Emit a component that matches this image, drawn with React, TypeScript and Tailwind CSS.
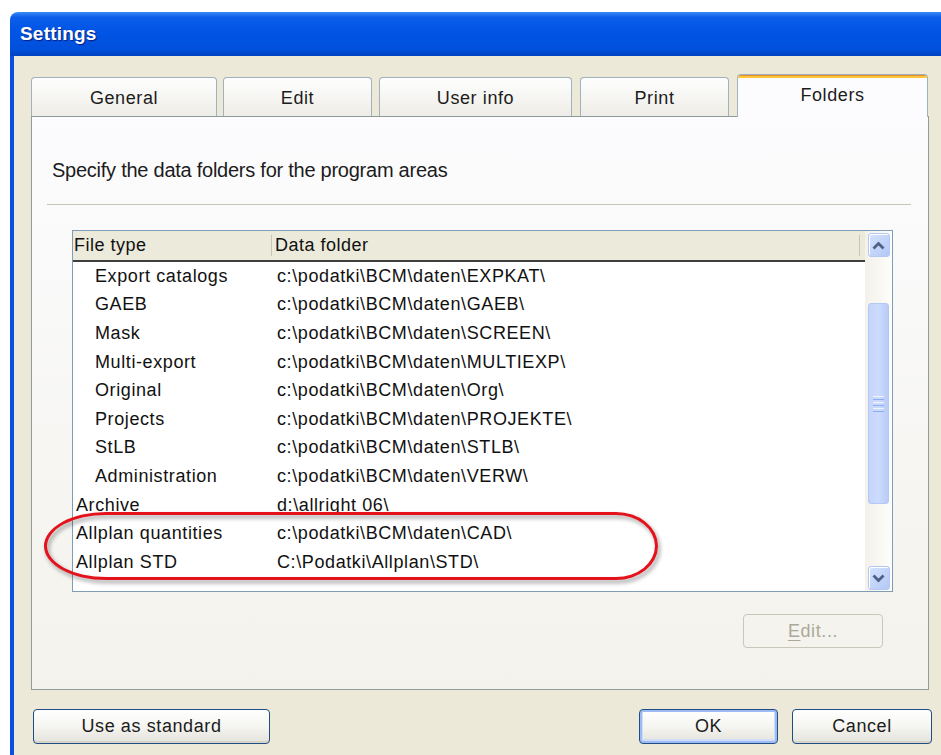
import React from "react";

type Row = { name: string; path: string; child: boolean };

const rows: Row[] = [
  { name: "Export catalogs", path: "c:\\podatki\\BCM\\daten\\EXPKAT\\", child: true },
  { name: "GAEB", path: "c:\\podatki\\BCM\\daten\\GAEB\\", child: true },
  { name: "Mask", path: "c:\\podatki\\BCM\\daten\\SCREEN\\", child: true },
  { name: "Multi-export", path: "c:\\podatki\\BCM\\daten\\MULTIEXP\\", child: true },
  { name: "Original", path: "c:\\podatki\\BCM\\daten\\Org\\", child: true },
  { name: "Projects", path: "c:\\podatki\\BCM\\daten\\PROJEKTE\\", child: true },
  { name: "StLB", path: "c:\\podatki\\BCM\\daten\\STLB\\", child: true },
  { name: "Administration", path: "c:\\podatki\\BCM\\daten\\VERW\\", child: true },
  { name: "Archive", path: "d:\\allright 06\\", child: false },
  { name: "Allplan quantities", path: "c:\\podatki\\BCM\\daten\\CAD\\", child: false },
  { name: "Allplan STD", path: "C:\\Podatki\\Allplan\\STD\\", child: false },
];

function Chevron({ up }: { up: boolean }) {
  return (
    <svg width="13" height="9" viewBox="0 0 13 9">
      <path
        d={up ? "M1.5 7.5 L6.5 2.5 L11.5 7.5" : "M1.5 1.5 L6.5 6.5 L11.5 1.5"}
        fill="none"
        stroke="#4D6185"
        strokeWidth="2.8"
      />
    </svg>
  );
}

function ScrollButton({ up }: { up: boolean }) {
  return (
    <div className="mx-auto flex h-[24px] w-[22px] items-center justify-center rounded-[3px] border border-[#B4C8F5] bg-gradient-to-br from-[#D6E2FD] to-[#B3C8F6] shadow-[inset_1px_1px_0_#ffffff]">
      <Chevron up={up} />
    </div>
  );
}

function Tab({ label, className }: { label: string; className: string }) {
  return (
    <div
      className={`flex h-[39px] items-center justify-center rounded-t-[4px] border border-b-0 border-[#9FB2BE] bg-gradient-to-b from-[#FEFEFE] to-[#EEEDE7] pt-[3px] text-[18px] tracking-[0.6px] text-[#1c1c1c] ${className}`}
    >
      {label}
    </div>
  );
}

function XPButton({
  children,
  className,
  focused,
}: {
  children: React.ReactNode;
  className: string;
  focused?: boolean;
}) {
  return (
    <div
      className={`flex items-center justify-center rounded-[4px] border border-[#1F4E86] bg-gradient-to-b from-[#FFFFFF] via-[#F5F5F1] to-[#E3E2DB] text-[18px] tracking-[0.6px] text-[#1c1c1c] ${
        focused
          ? "shadow-[inset_0_0_0_2px_#9DBBF2,inset_0_-1px_0_3px_#CFDDF8]"
          : "shadow-[inset_0_-2px_0_#D6D3C8]"
      } ${className}`}
    >
      {children}
    </div>
  );
}

export default function App() {
  return (
    <div className="relative h-[755px] w-[941px] overflow-hidden bg-white pl-[10px] pt-[12px] font-['Liberation_Sans',Arial,sans-serif]">
      {/* dialog window */}
      <div className="flex h-full flex-col overflow-hidden rounded-tl-[8px]">
        {/* title bar */}
        <div className="flex h-[44px] shrink-0 items-center bg-[linear-gradient(to_bottom,#3D8BF5_0%,#0C5DEA_12%,#0055E5_45%,#0150DC_85%,#0042C2_100%)] pl-[10px]">
          <span className="text-[19px] font-bold tracking-[0.2px] text-white [text-shadow:1px_1px_1px_#0A1E80]">
            Settings
          </span>
        </div>

        {/* window body */}
        <div className="flex flex-1 flex-col border-l-[4px] border-[#0B4FE0] bg-[#ECE9D8] pl-[17px] pt-[17px]">
          {/* tabs */}
          <div className="flex h-[43px] items-end">
            <Tab label="General" className="w-[186px]" />
            <Tab label="Edit" className="ml-[6px] w-[149px]" />
            <Tab label="User info" className="ml-[7px] w-[193px]" />
            <Tab label="Print" className="ml-[8px] w-[149px]" />
            <div className="relative z-10 -mb-px ml-[8px] flex h-[43px] w-[191px] flex-col overflow-hidden rounded-t-[4px] border border-b-0 border-[#9FB2BE] bg-[#FCFCFE]">
              <div className="h-[1px] bg-[#E68B2C]" />
              <div className="h-[2px] bg-[#FFC73C]" />
              <div className="flex flex-1 items-center justify-center pb-[5px] text-[18px] tracking-[0.6px] text-[#1c1c1c]">
                Folders
              </div>
            </div>
          </div>

          {/* tab panel */}
          <div className="flex h-[574px] w-[898px] flex-col border border-[#919B9C] bg-gradient-to-b from-[#FCFCFE] to-[#F3F2EC]">
            <div className="pl-[20px] pt-[41px] text-[20px] leading-[24px] tracking-[-0.25px] text-[#1c1c1c]">
              Specify the data folders for the program areas
            </div>
            <div className="ml-[15px] mr-[17px] mt-[22px] h-[2px] border-t border-[#C8C5B5] border-b-white" />

            {/* list view */}
            <div className="ml-[40px] mt-[24px] flex h-[362px] w-[821px] border border-[#7F9DB9] bg-white">
              <div className="flex flex-1 flex-col">
                {/* header */}
                <div className="flex h-[31px] shrink-0 items-stretch border-b-2 border-[#3F3F3F] bg-[#EBEADB] text-[18px] tracking-[0.5px] text-[#111]">
                  <div className="flex w-[198px] items-center pl-[1px]">File type</div>
                  <div className="my-[4px] w-px bg-[#C7C5B2]" />
                  <div className="flex flex-1 items-center pl-[3px]">Data folder</div>
                  <div className="my-[4px] mr-[5px] w-px bg-[#C7C5B2]" />
                </div>
                {/* rows */}
                <div className="flex flex-col">
                  {rows.map((r) => (
                    <div key={r.name} className="flex h-[28.6px] items-center text-[18px] tracking-[0.6px] text-[#111]">
                      <div className={`w-[199px] ${r.child ? "pl-[22px]" : "pl-[3px]"}`}>{r.name}</div>
                      <div className="pl-[5px]">{r.path}</div>
                    </div>
                  ))}
                </div>
              </div>

              {/* vertical scrollbar */}
              <div className="flex w-[27px] flex-col bg-gradient-to-r from-[#F3F1EA] to-[#FDFDFA] pb-[1px] pt-[2px]">
                <ScrollButton up />
                <div className="mx-auto mt-[46px] flex h-[201px] w-[21px] flex-col items-center justify-center gap-[2px] rounded-[3px] border border-[#B3C8F4] bg-gradient-to-r from-[#C4D5FC] via-[#CCDBFD] to-[#B9CCF8]">
                  <div className="h-px w-[11px] bg-[#EEF3FE]" />
                  <div className="h-px w-[11px] bg-[#8DAEF0]" />
                  <div className="h-px w-[11px] bg-[#EEF3FE]" />
                  <div className="h-px w-[11px] bg-[#8DAEF0]" />
                  <div className="h-px w-[11px] bg-[#EEF3FE]" />
                  <div className="h-px w-[11px] bg-[#8DAEF0]" />
                </div>
                <div className="flex-1" />
                <ScrollButton up={false} />
              </div>
            </div>

            {/* edit button (disabled) */}
            <div className="ml-auto mr-[45px] mt-[22px] flex h-[34px] w-[140px] items-center justify-center rounded-[4px] border border-[#C9C7BA] bg-[#F4F3EE] text-[18px] tracking-[0.6px] text-[#ACA899]">
              <span>
                <span className="underline underline-offset-[3px]">E</span>dit...
              </span>
            </div>
          </div>

          {/* dialog buttons */}
          <div className="mt-[19px] flex w-[901px] items-start justify-between">
            <XPButton className="ml-[2px] h-[35px] w-[237px]">Use as standard</XPButton>
            <div className="flex gap-[14px]">
              <XPButton className="h-[35px] w-[139px]" focused>
                OK
              </XPButton>
              <XPButton className="h-[35px] w-[140px]">Cancel</XPButton>
            </div>
          </div>
        </div>
      </div>

      {/* red highlight ring drawn over the list */}
      <div className="pointer-events-none absolute left-[44px] top-[512px] h-[68px] w-[614px] rounded-bl-[62px_34px] rounded-br-[42px_34px] rounded-tl-[62px_34px] rounded-tr-[42px_34px] border-[3px] border-[#E5121B] drop-shadow-[2px_3px_2px_rgba(0,0,0,0.4)]" />
    </div>
  );
}
